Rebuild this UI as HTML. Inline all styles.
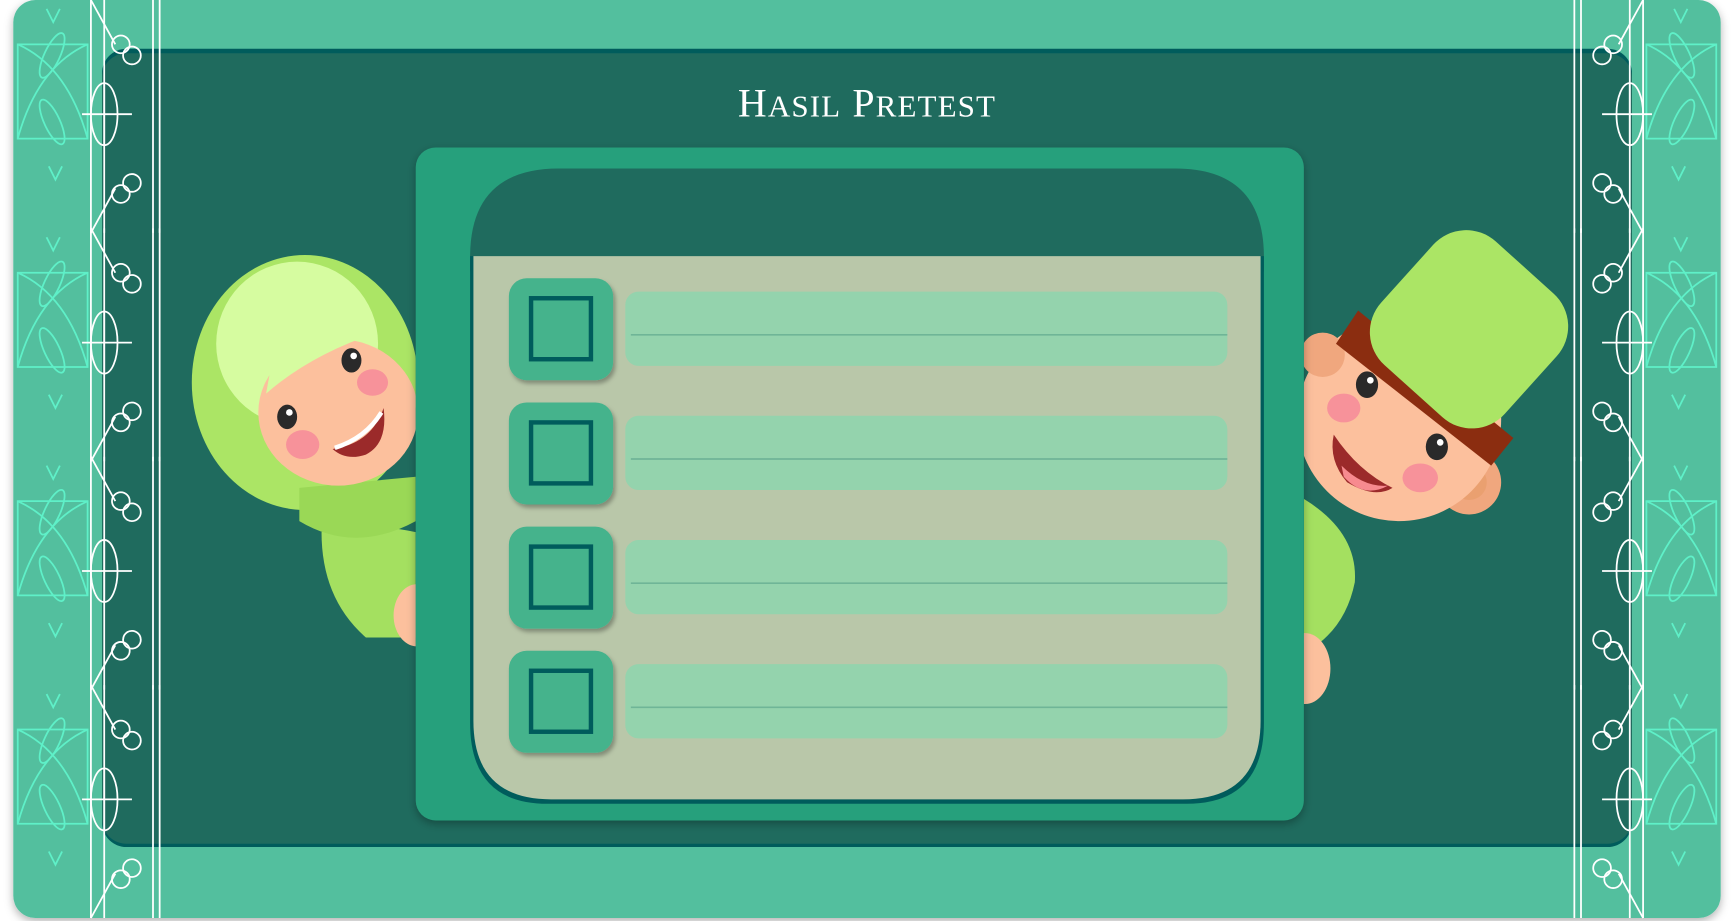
<!DOCTYPE html>
<html><head><meta charset="utf-8"><style>
html,body{margin:0;padding:0;background:#fff;width:1734px;height:921px;overflow:hidden}
svg{display:block}
</style></head><body>
<svg width="1734" height="921" viewBox="0 0 1564 830.7" xmlns="http://www.w3.org/2000/svg">
<defs>
<filter id="sh" x="-10%" y="-10%" width="120%" height="120%"><feDropShadow dx="0" dy="3" stdDeviation="4" flood-color="#000" flood-opacity="0.3"/></filter>
<filter id="sh2" x="-10%" y="-10%" width="130%" height="130%"><feDropShadow dx="2" dy="3" stdDeviation="2" flood-color="#000" flood-opacity="0.3"/></filter>
<g id="orn" fill="none" stroke-width="1.6">
  <g stroke="#5ff0c8">
    <path d="M2 40 H65 V125 H2 Z"/>
    <path d="M2 125 Q20 60 65 40"/><path d="M65 125 Q47 60 2 40"/>
    <ellipse cx="33" cy="50" rx="7" ry="22" transform="rotate(25 33 50)"/>
    <ellipse cx="33" cy="110" rx="7" ry="22" transform="rotate(-25 33 110)"/>
    <path d="M28 8 l6 12 l6 -12 M30 150 l6 12 l6 -12"/>
  </g>
  <g stroke="#ffffff">
    <path d="M68 0 V210 M80 0 V210 M124 0 V210 M130 0 V210"/>
    <path d="M68 0 L90 40 M68 210 L90 170"/>
    <circle cx="95" cy="40" r="8"/><circle cx="105" cy="50" r="8"/><circle cx="105" cy="165" r="8"/><circle cx="95" cy="175" r="8"/>
    <ellipse cx="80" cy="103" rx="12" ry="28"/>
    <path d="M60 103 h45 M80 75 v56"/>
  </g>
</g>
<clipPath id="boardclipL"><rect x="0" y="0" width="375" height="830"/></clipPath>
<clipPath id="boardclipR"><rect x="1176" y="0" width="400" height="830"/></clipPath>
</defs>

<rect x="12" y="0" width="1540" height="828" rx="20" fill="#52bf9e" filter="url(#sh)"/>
<rect x="92" y="44" width="1380" height="720" rx="22" fill="#005c5c"/>
<rect x="92" y="48" width="1380" height="713" rx="22" fill="#1f6b5e"/>

<g transform="translate(14,0)"><use href="#orn"/></g>
<g transform="translate(14,206)"><use href="#orn"/></g>
<g transform="translate(14,412)"><use href="#orn"/></g>
<g transform="translate(14,618)"><use href="#orn"/></g>
<g transform="translate(1550,0) scale(-1,1)"><use href="#orn"/></g>
<g transform="translate(1550,206) scale(-1,1)"><use href="#orn"/></g>
<g transform="translate(1550,412) scale(-1,1)"><use href="#orn"/></g>
<g transform="translate(1550,618) scale(-1,1)"><use href="#orn"/></g>

<text x="782" y="105" text-anchor="middle" fill="#ffffff" font-family="Liberation Serif, serif" font-size="36" letter-spacing="1"><tspan>H</tspan><tspan font-size="28">ASIL</tspan><tspan> P</tspan><tspan font-size="28">RETEST</tspan></text>

<!-- girl -->
<g clip-path="url(#boardclipL)">
  <path d="M290 480 Q330 470 375 480 L375 575 L330 575 Q290 540 290 480Z" fill="#a4e060"/>
  <ellipse cx="275" cy="345" rx="102" ry="115" fill="#abe565"/>
  <path d="M270 470 Q320 500 375 470 L375 430 L270 440Z" fill="#9ad856"/>
  <ellipse cx="268" cy="310" rx="73" ry="74" fill="#d6fca0"/>
  <ellipse cx="305" cy="372" rx="72" ry="66" fill="#fcc09d"/>
  <path d="M240 355 Q280 320 340 300 Q300 285 250 300 Z" fill="#d6fca0"/>
  <ellipse cx="317" cy="325" rx="9" ry="11" fill="#2a2a2a"/>
  <ellipse cx="259" cy="376" rx="9" ry="11" fill="#2a2a2a"/>
  <circle cx="319" cy="321" r="3" fill="#fff"/><circle cx="261" cy="372" r="3" fill="#fff"/>
  <ellipse cx="336" cy="345" rx="14" ry="12" fill="#f7929a"/>
  <ellipse cx="273" cy="401" rx="15" ry="13" fill="#f7929a"/>
  <path d="M300 405 Q335 400 346 368 Q350 400 330 410 Q312 416 300 405Z" fill="#9b2a2a"/>
  <path d="M302 404 Q330 395 344 372" stroke="#fff" stroke-width="4" fill="none"/>
  <ellipse cx="376" cy="555" rx="21" ry="28" fill="#fcc09d"/>
</g>

<!-- boy -->
<g clip-path="url(#boardclipR)">
  <path d="M1176 450 Q1225 480 1222 525 Q1215 560 1190 580 L1176 580Z" fill="#a4e060"/>
  <circle cx="1325" cy="435" r="29" fill="#f0a77e"/>
  <circle cx="1325" cy="435" r="16" fill="#eaa070"/>
  <ellipse cx="1262" cy="378" rx="92" ry="92" fill="#fcc09d"/>
  <circle cx="1193" cy="320" r="20" fill="#f0a77e"/>
  <path d="M1205 310 L1225 280 L1365 395 L1345 420Z" fill="#8b2d10"/>
  <rect x="1250" y="222" width="150" height="150" rx="40" transform="rotate(42 1325 297)" fill="#abe565"/>
  <ellipse cx="1233" cy="347" rx="10" ry="12" fill="#2a2a2a"/>
  <ellipse cx="1296" cy="403" rx="10" ry="12" fill="#2a2a2a"/>
  <circle cx="1236" cy="343" r="3" fill="#fff"/><circle cx="1299" cy="399" r="3" fill="#fff"/>
  <ellipse cx="1212" cy="368" rx="15" ry="13" fill="#f7929a"/>
  <ellipse cx="1281" cy="431" rx="16" ry="13" fill="#f7929a"/>
  <path d="M1203 392 Q1225 425 1256 440 Q1240 450 1215 435 Q1198 415 1203 392Z" fill="#9b2a2a"/>
  <path d="M1210 420 Q1230 440 1252 438 Q1230 450 1212 430Z" fill="#f78a8f"/>
  <ellipse cx="1177" cy="603" rx="23" ry="32" fill="#fcc09d"/>
</g>

<!-- board -->
<rect x="375" y="133" width="801" height="607" rx="18" fill="#26a07c" filter="url(#sh)"/>
<path d="M424 245 V232 Q424 152 504 152 H1060 Q1140 152 1140 232 V245 Z" fill="#1f6b5e"/>
<path d="M424 231 H1140 V652 Q1140 725 1070 725 H494 Q424 725 424 652 Z" fill="#005c5c"/>
<path d="M427 231 H1137 V650 Q1137 721 1067 721 H497 Q427 721 427 650 Z" fill="#b9c7a9"/>

<g id="row">
  <rect x="459" y="251" width="94" height="92" rx="16" fill="#45b38c" filter="url(#sh2)"/>
  <rect x="479" y="269" width="54" height="55" fill="#45b38c" stroke="#005c5c" stroke-width="4"/>
  <rect x="564" y="263" width="543" height="67" rx="12" fill="#94d3ad"/>
  <line x1="569" y1="302" x2="1107" y2="302" stroke="#6fb597" stroke-width="1.5"/>
</g>
<use href="#row" y="112"/>
<use href="#row" y="224"/>
<use href="#row" y="336"/>
</svg>
</body></html>
